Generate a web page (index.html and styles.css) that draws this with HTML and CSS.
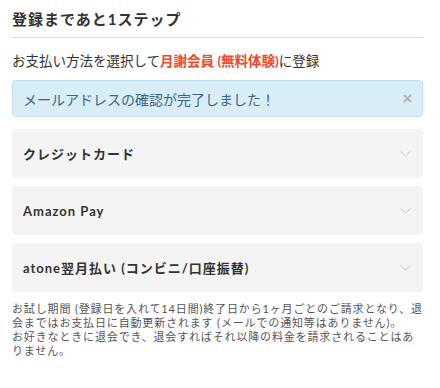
FILE: index.html
```html
<!DOCTYPE html>
<html lang="ja">
<head>
    <meta charset="UTF-8">
    <meta name="viewport" content="width=device-width, initial-scale=1.0">
    <title>登録まであと1ステップ</title>
    <link rel="stylesheet" href="styles.css">
</head>
<body>
    <div class="container">
        <h1 class="page-title">登録まであと1ステップ</h1>
        <p class="lead">お支払い方法を選択して<strong class="accent">月謝会員 (無料体験)</strong>に登録</p>

        <div class="alert">
            <span>メールアドレスの確認が完了しました！</span>
            <button class="close" aria-label="閉じる">
                <svg width="9" height="9" viewBox="0 0 9 9"><path d="M1 1L8 8M8 1L1 8" stroke="#b3b3b3" stroke-width="1.8" fill="none"/></svg>
            </button>
        </div>

        <div class="methods">
            <div class="method">
                <span class="method-name">クレジットカード</span>
                <svg class="chevron" width="11" height="6" viewBox="0 0 11 6"><path d="M0.5 0.5L5.5 5L10.5 0.5" stroke="#c9c9c9" stroke-width="1" fill="none"/></svg>
            </div>
            <div class="method">
                <span class="method-name">Amazon Pay</span>
                <svg class="chevron" width="11" height="6" viewBox="0 0 11 6"><path d="M0.5 0.5L5.5 5L10.5 0.5" stroke="#c9c9c9" stroke-width="1" fill="none"/></svg>
            </div>
            <div class="method">
                <span class="method-name">atone翌月払い (コンビニ/口座振替)</span>
                <svg class="chevron" width="11" height="6" viewBox="0 0 11 6"><path d="M0.5 0.5L5.5 5L10.5 0.5" stroke="#c9c9c9" stroke-width="1" fill="none"/></svg>
            </div>
        </div>

        <p class="note">お試し期間 (登録日を入れて14日間)終了日から1ヶ月ごとのご請求となり、退会まではお支払日に自動更新されます (メールでの通知等はありません)。<br>お好きなときに退会でき、退会すればそれ以降の料金を請求されることはありません。</p>
    </div>
</body>
</html>
```

FILE: styles.css
```css
body {
    margin: 0;
    background: #fff;
    color: #333;
    font-family: Lato, "Noto Sans CJK JP", sans-serif;
}
.container {
    width: 411px;
    margin-left: 12px;
    padding-top: 8px;
}
.page-title {
    margin: 0;
    font-size: 15px;
    font-weight: bold;
    letter-spacing: 1px;
    line-height: 22px;
    padding-bottom: 7px;
    border-bottom: 1px solid #ddd;
}
.lead {
    margin: 14px 0 0;
    font-size: 13.5px;
    line-height: 18px;
}
.accent {
    color: #f2472a;
}
.alert {
    margin-top: 10px;
    height: 35px;
    padding: 0 10px;
    display: flex;
    align-items: center;
    justify-content: space-between;
    background: #d9edf7;
    border: 1px solid #bce0f1;
    border-radius: 4px;
    color: #3d6680;
    font-size: 14px;
}
.close {
    background: none;
    border: none;
    padding: 0;
    display: flex;
}
.methods {
    margin-top: 12px;
    display: flex;
    flex-direction: column;
    gap: 8px;
}
.method {
    height: 49px;
    padding: 0 12px 0 11px;
    display: flex;
    align-items: center;
    justify-content: space-between;
    background: #f4f4f4;
    border-radius: 4px;
}
.method-name {
    font-size: 13px;
    font-weight: bold;
    letter-spacing: 1px;
}
.note {
    margin: 10px 0 0;
    font-size: 11px;
    letter-spacing: 0.85px;
    line-height: 14px;
    color: #555;
}
```
